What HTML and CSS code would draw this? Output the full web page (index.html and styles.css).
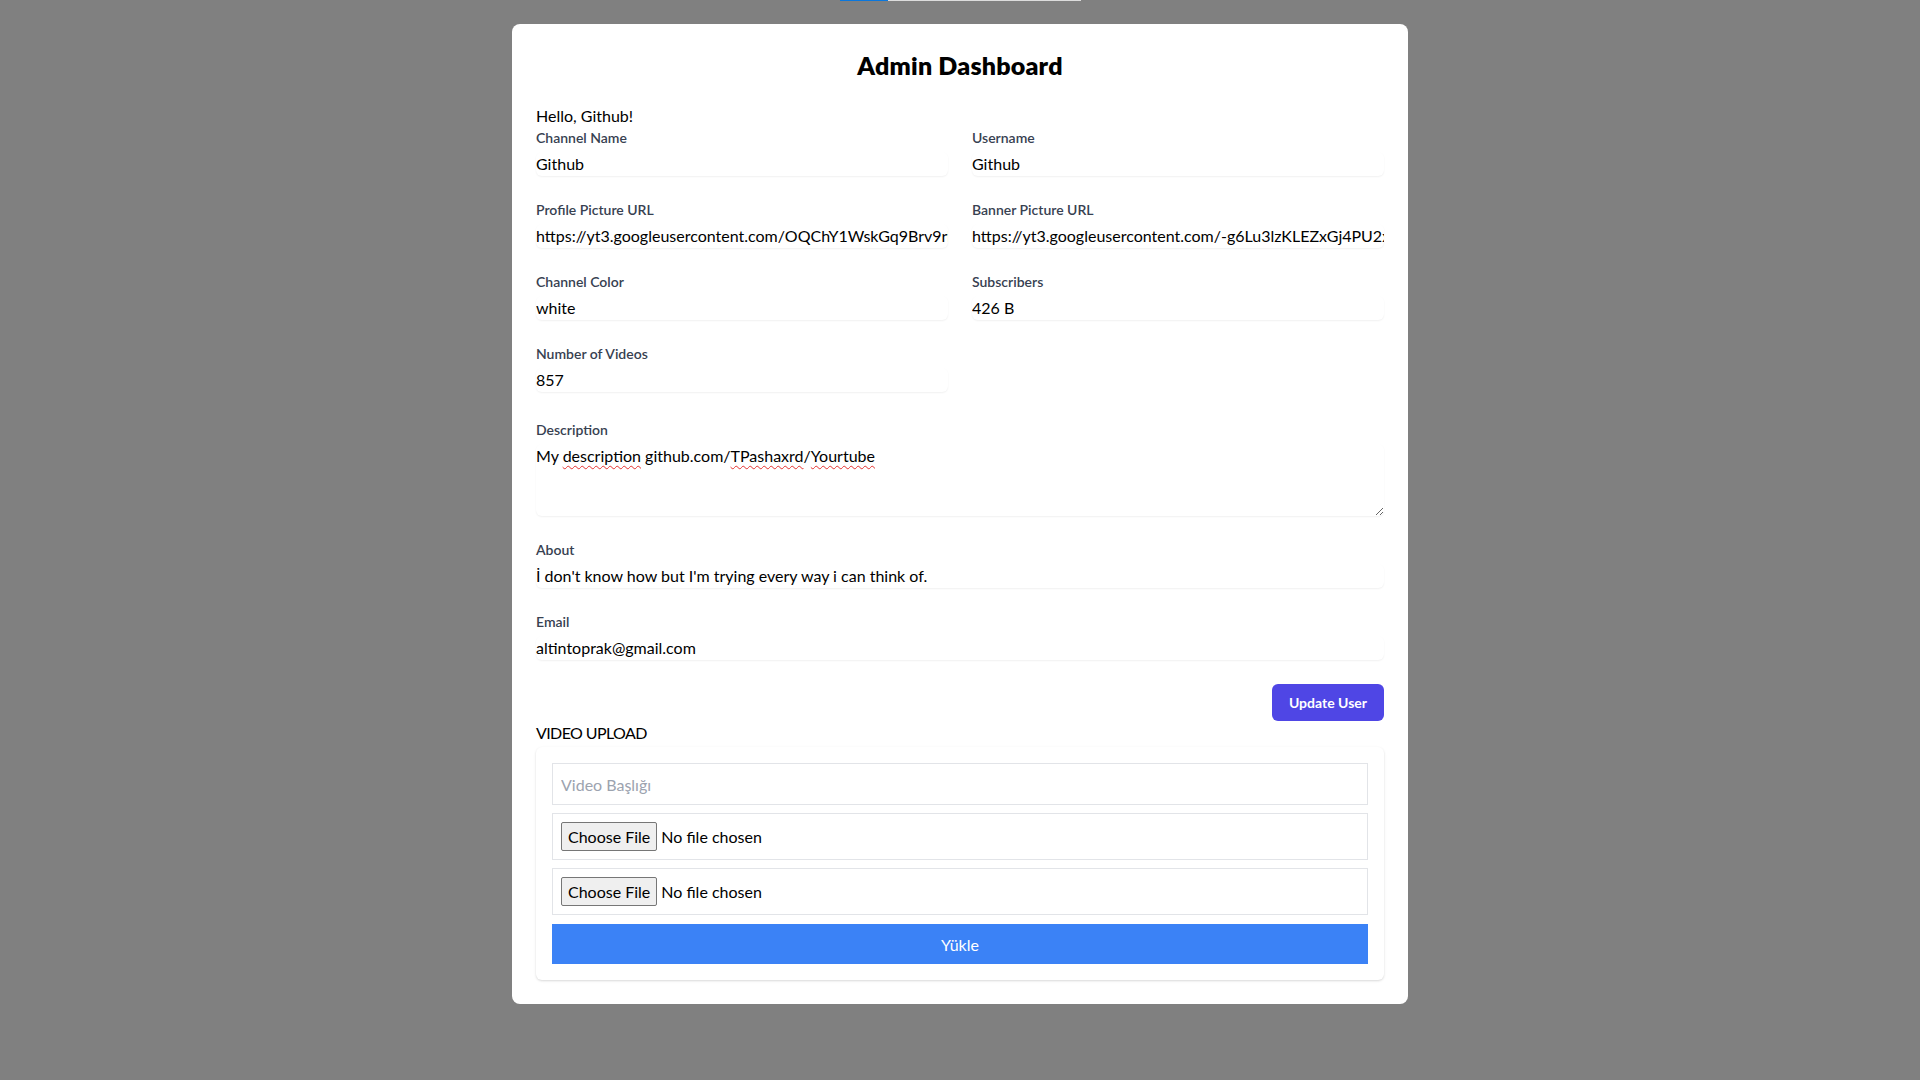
FILE: index.html
```html
<!DOCTYPE html>
<html lang="en">
<head>
<meta charset="utf-8">
<title>Admin Dashboard</title>
<link rel="stylesheet" href="styles.css">
</head>
<body>
<div class="topbar"><div class="topbar-fill"></div></div>
<main class="page">
  <section class="card">
    <h1 class="title">Admin Dashboard</h1>
    <p class="greeting">Hello, Github!</p>
    <div class="grid">
      <div class="field">
        <label class="label">Channel Name</label>
        <input class="control" type="text" value="Github">
      </div>
      <div class="field">
        <label class="label">Username</label>
        <input class="control" type="text" value="Github">
      </div>
      <div class="field">
        <label class="label">Profile Picture URL</label>
        <input class="control" type="text" value="https://yt3.googleusercontent.com/OQChY1WskGq9Brv9rkXmzJ5jW1v6yN2nH4bcd">
      </div>
      <div class="field">
        <label class="label">Banner Picture URL</label>
        <input class="control" type="text" value="https://yt3.googleusercontent.com/-g6Lu3lzKLEZxGj4PU2xQmT8rB1vN0">
      </div>
      <div class="field">
        <label class="label">Channel Color</label>
        <input class="control" type="text" value="white">
      </div>
      <div class="field">
        <label class="label">Subscribers</label>
        <input class="control" type="text" value="426 B">
      </div>
      <div class="field">
        <label class="label">Number of Videos</label>
        <input class="control" type="text" value="857">
      </div>
    </div>
    <div class="field block desc">
      <label class="label">Description</label>
      <div class="control textarea" role="textbox">My <span class="typo">description</span> github.com/<span class="typo">TPashaxrd</span>/<span class="typo">Yourtube</span></div>
    </div>
    <div class="field block">
      <label class="label">About</label>
      <input class="control" type="text" value="İ don't know how but I'm trying every way i can think of.">
    </div>
    <div class="field block">
      <label class="label">Email</label>
      <input class="control" type="text" value="altintoprak@gmail.com">
    </div>
    <div class="actions">
      <button class="btn-update" type="button">Update User</button>
    </div>
    <h2 class="upload-title">VIDEO UPLOAD</h2>
    <div class="upload-box">
      <input class="upload-input" type="text" placeholder="Video Başlığı">
      <div class="upload-input file-row"><input type="file"></div>
      <div class="upload-input file-row"><input type="file"></div>
      <button class="btn-upload" type="button">Yükle</button>
    </div>
  </section>
</main>
</body>
</html>
```
FILE: styles.css
```css
html, body {
  margin: 0;
  padding: 0;
}
body {
  background: #808080;
  min-height: 1080px;
  font-family: Lato, "Liberation Sans", sans-serif;
  color: #000;
}
.topbar {
  position: absolute;
  top: 0;
  left: 840px;
  width: 241px;
  height: 1px;
  background: #dcdcdc;
}
.topbar-fill {
  width: 48px;
  height: 1px;
  background: #0b77dc;
}
.page {
  display: flex;
  justify-content: center;
  padding-top: 24px;
}
.card {
  width: 896px;
  box-sizing: border-box;
  padding: 24px;
  background: #fff;
  border-radius: 8px;
}
.title {
  margin: 0 0 24px;
  font-size: 25px;
  line-height: 32px;
  font-weight: 800;
  letter-spacing: 0.2px;
  text-align: center;
  padding-top: 1px;
  height: 31px;
}
.greeting {
  margin: 0;
  font-size: 16px;
  line-height: 24px;
}
.grid {
  display: grid;
  grid-template-columns: 1fr 1fr;
  gap: 24px;
}
.field {
  display: flex;
  flex-direction: column;
}
.block {
  margin-top: 24px;
}
.desc {
  margin-top: 28px;
}
.label {
  font-size: 14px;
  line-height: 20px;
  font-weight: 600;
  color: #374151;
}
.control {
  display: block;
  width: 100%;
  box-sizing: border-box;
  margin: 4px 0 0;
  height: 24px;
  padding: 0;
  border: 0;
  border-radius: 6px;
  background: #fff;
  box-shadow: 0 1px 2px rgba(0, 0, 0, 0.06);
  font-family: inherit;
  font-size: 16px;
  line-height: 24px;
  color: #000;
  outline: none;
}
.textarea {
  height: 72px;
  resize: vertical;
  overflow: auto;
  white-space: pre-wrap;
}
.typo {
  text-decoration: underline wavy #e4312f;
  text-decoration-thickness: 1px;
  text-underline-offset: 3px;
}
.actions {
  display: flex;
  justify-content: flex-end;
  margin-top: 24px;
}
.btn-update {
  height: 37px;
  padding: 0 17px;
  border: 0;
  border-radius: 6px;
  background: #4f46e5;
  color: #fff;
  font-family: inherit;
  font-size: 14px;
  font-weight: 700;
}
.upload-title {
  margin: 0;
  font-size: 16px;
  line-height: 24px;
  font-weight: 400;
  letter-spacing: -0.6px;
}
.upload-box {
  margin-top: 2px;
  padding: 16px;
  display: flex;
  flex-direction: column;
  gap: 8px;
  background: #fff;
  border-radius: 6px;
  box-shadow: 0 1px 3px rgba(0, 0, 0, 0.1), 0 1px 2px rgba(0, 0, 0, 0.06);
}
.upload-input {
  box-sizing: border-box;
  width: 100%;
  margin: 0;
  padding: 8px;
  border: 1px solid #e2e4e8;
  background: #fff;
  font-family: inherit;
  font-size: 16px;
  line-height: 24px;
  height: 42px;
  color: #000;
  outline: none;
}
.upload-input::placeholder {
  color: #9ca3af;
}
.file-row {
  height: 47px;
  display: flex;
  align-items: center;
}
.file-row input {
  font-family: inherit;
  font-size: 16px;
  color: #000;
}
.file-row input::file-selector-button {
  height: 29px;
  margin: 0 4px 0 0;
  padding: 1px 6px;
  border: 1px solid #767676;
  border-radius: 2px;
  background: #efefef;
  color: #000;
  font-family: inherit;
  font-size: 16px;
}
.btn-upload {
  margin-top: 1px;
  height: 40px;
  border: 0;
  background: #3b82f6;
  color: #fff;
  font-family: inherit;
  font-size: 16px;
}
```
